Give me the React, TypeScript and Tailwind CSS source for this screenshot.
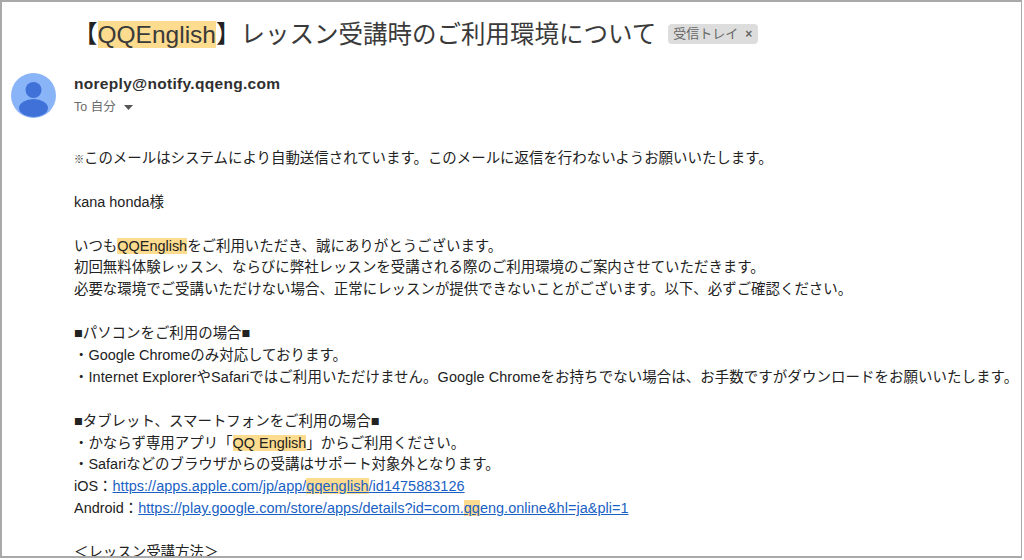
const font = "font-['Liberation_Sans','Noto_Sans_CJK_JP',sans-serif]";

function Mark({ children }: { children: React.ReactNode }) {
  return <span className="bg-[#fddc8f]">{children}</span>;
}

function Line({ children }: { children?: React.ReactNode }) {
  return <div className="h-[21.9px] whitespace-nowrap">{children}</div>;
}

function A({ children }: { children: React.ReactNode }) {
  return <span className="text-[#1a5fc4] underline tracking-[0.04px]">{children}</span>;
}

export default function App() {
  return (
    <div className={`${font} w-[1024px] h-[560px] overflow-hidden bg-white`}>
      <div className="w-[1022px] h-[558px] border-2 border-[#a9a9a9] border-r-[1.5px] overflow-hidden">
        <div className="flex items-center h-[46px] mt-[10px] pl-[71px]">
          <h1 className="text-[24.5px] font-normal text-[#3a3a3a] whitespace-nowrap">
            <span className="text-[#222]">【</span><Mark>QQEnglish</Mark><span className="text-[#222]">】</span>レッスン受講時のご利用環境について
          </h1>
          <span className="ml-[12px] mt-[-2px] h-5 w-[90px] rounded-[4px] bg-[#dddddd] text-[#666] text-[13px] flex items-center pl-[5px] gap-[7px] whitespace-nowrap">
            受信トレイ
            <span className="text-[12px] font-bold leading-none">×</span>
          </span>
        </div>
        <div className="flex mt-[15px] pl-[9px]">
          <svg width="45" height="45" viewBox="0 0 45 45" className="shrink-0">
            <circle cx="22.5" cy="22.5" r="22.5" fill="#8ab4f8" />
            <circle cx="22.5" cy="17" r="8" fill="#3f71d8" />
            <ellipse cx="22.5" cy="35" rx="14.5" ry="9" fill="#3f71d8" />
          </svg>
          <div className="ml-[18px]">
            <div className="text-[15.5px] leading-[20px] font-bold text-[#2f2f2f] tracking-[0.3px] mt-[1px]">noreply@notify.qqeng.com</div>
            <div className="flex items-center text-[12.5px] leading-[20px] text-[#6b6b6b] mt-[3px]">
              To 自分
              <svg width="9" height="5" viewBox="0 0 9 5" className="ml-[8px] mt-[1px]"><path d="M0 0h9L4.5 5z" fill="#555" /></svg>
            </div>
          </div>
        </div>
        <div className="mt-[30px] pl-[72px] text-[14.45px] leading-[21.9px] text-[#222]">
          <Line><span className="text-[10px]">※</span>このメールはシステムにより自動送信されています。このメールに返信を行わないようお願いいたします。</Line>
          <Line />
          <Line>kana honda様</Line>
          <Line />
          <Line>いつも<Mark>QQEnglish</Mark>をご利用いただき、誠にありがとうございます。</Line>
          <Line>初回無料体験レッスン、ならびに弊社レッスンを受講される際のご利用環境のご案内させていただきます。</Line>
          <Line>必要な環境でご受講いただけない場合、正常にレッスンが提供できないことがございます。以下、必ずご確認ください。</Line>
          <Line />
          <Line>■パソコンをご利用の場合■</Line>
          <Line>・Google Chromeのみ対応しております。</Line>
          <Line><span className="tracking-[0.08px]">・Internet ExplorerやSafariではご利用いただけません。Google Chromeをお持ちでない場合は、お手数ですがダウンロードをお願いいたします。</span></Line>
          <Line />
          <Line>■タブレット、スマートフォンをご利用の場合■</Line>
          <Line>・かならず専用アプリ「<Mark>QQ English</Mark>」からご利用ください。</Line>
          <Line>・Safariなどのブラウザからの受講はサポート対象外となります。</Line>
          <Line>iOS：<A>https://apps.apple.com/jp/app/<Mark>qqenglish</Mark>/id1475883126</A></Line>
          <Line>Android：<A>https://play.google.com/store/apps/details?id=com.<Mark>qq</Mark>eng.online&amp;hl=ja&amp;pli=1</A></Line>
          <Line />
          <Line>＜レッスン受講方法＞</Line>
        </div>
      </div>
    </div>
  );
}
